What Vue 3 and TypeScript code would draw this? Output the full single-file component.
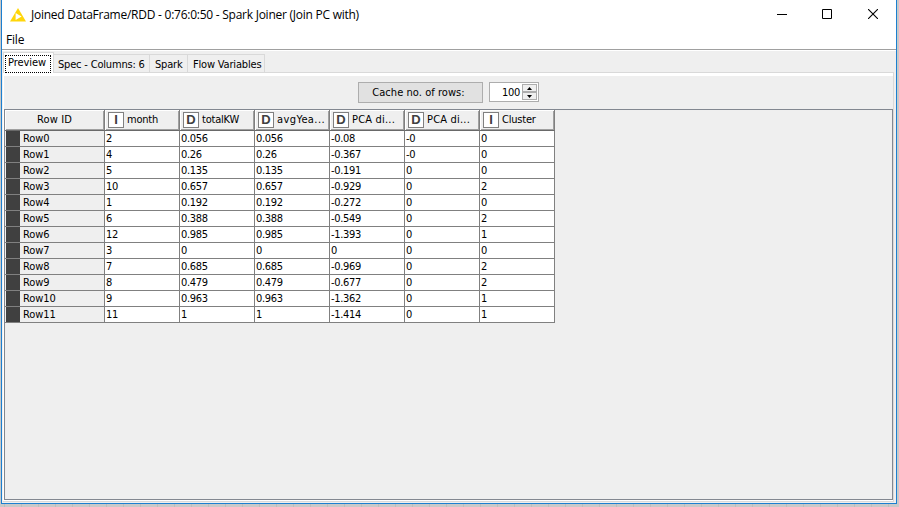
<script setup lang="ts">
interface Column { kind: 'I' | 'D'; name: string; cls: string }
const columns: Column[] = [
  { kind: 'I', name: 'month', cls: 'n-month' },
  { kind: 'D', name: 'totalKW', cls: 'n-total' },
  { kind: 'D', name: 'avgYea...', cls: 'n-avg' },
  { kind: 'D', name: 'PCA di...', cls: 'n-pca' },
  { kind: 'D', name: 'PCA di...', cls: 'n-pca' },
  { kind: 'I', name: 'Cluster', cls: 'n-cluster' },
]
const rows: string[][] = [
  ['2', '0.056', '0.056', '-0.08', '-0', '0'],
  ['4', '0.26', '0.26', '-0.367', '-0', '0'],
  ['5', '0.135', '0.135', '-0.191', '0', '0'],
  ['10', '0.657', '0.657', '-0.929', '0', '2'],
  ['1', '0.192', '0.192', '-0.272', '0', '0'],
  ['6', '0.388', '0.388', '-0.549', '0', '2'],
  ['12', '0.985', '0.985', '-1.393', '0', '1'],
  ['3', '0', '0', '0', '0', '0'],
  ['7', '0.685', '0.685', '-0.969', '0', '2'],
  ['8', '0.479', '0.479', '-0.677', '0', '2'],
  ['9', '0.963', '0.963', '-1.362', '0', '1'],
  ['11', '1', '1', '-1.414', '0', '1'],
]
</script>

<template>
  <div class="desktop">
    <div class="window">
      <header class="titlebar">
        <svg class="logo" width="16" height="14" viewBox="0 0 16 14">
          <path d="M8 0L16 13.6H0Z" fill="#ffd60a" />
          <path d="M5.6 5L11.6 8.6L5.6 12Z" fill="#fff" />
        </svg>
        <span class="title">Joined DataFrame/RDD - 0:76:0:50 - Spark Joiner (Join PC with)</span>
        <div class="controls">
          <svg class="minimize" width="10" height="10" viewBox="0 0 10 10"><path d="M0 5.5H10" stroke="#000" /></svg>
          <svg width="10" height="10" viewBox="0 0 10 10"><path d="M.5 .5H9.5V9.5H.5Z" fill="none" stroke="#000" /></svg>
          <svg width="10" height="10" viewBox="0 0 10 10"><path d="M0 0L10 10M10 0L0 10" stroke="#000" stroke-width="1.1" /></svg>
        </div>
      </header>
      <nav class="menubar"><span>File</span></nav>
      <main class="body">
        <div class="tabs">
          <div class="tab active"><span class="focus">Preview</span></div>
          <div class="tab spec">Spec - Columns: 6</div>
          <div class="tab spark">Spark</div>
          <div class="tab flow">Flow Variables</div>
        </div>
        <section class="pane">
          <div class="toolbar">
            <button class="cache">Cache no. of rows:</button>
            <div class="spinner">
              <span class="value">100</span>
              <div class="arrows">
                <i><svg width="5" height="3" viewBox="0 0 5 3"><path d="M0 3L2.5 0L5 3Z" /></svg></i>
                <i><svg width="5" height="3" viewBox="0 0 5 3"><path d="M0 0L2.5 3L5 0Z" /></svg></i>
              </div>
            </div>
          </div>
          <div class="scroll">
            <div class="grid">
              <div class="head rowid">Row ID</div>
              <div v-for="(c, i) in columns" :key="i" class="head">
                <b class="kind">{{ c.kind }}</b><span :class="c.cls">{{ c.name }}</span>
              </div>
              <template v-for="(r, i) in rows" :key="i">
                <div class="cell key"><i class="swatch"></i><span>Row{{ i }}</span></div>
                <div v-for="(v, j) in r" :key="j" class="cell">{{ v }}</div>
              </template>
            </div>
          </div>
        </section>
      </main>
    </div>
  </div>
</template>

<style>
body { overflow: hidden; }
</style>
<style scoped>
.desktop, .desktop * { box-sizing: border-box; }
.desktop {
  width: 899px; height: 507px; padding: 0 2px 3px 1px;
  background: repeating-linear-gradient(90deg, #c9c9c9 0 4px, #bdbdbd 4px 5px, #c9c9c9 5px 17px);
  font: 11px/14px "DejaVu Sans Condensed", "DejaVu Sans", sans-serif;
  font-stretch: condensed; letter-spacing: -.3px; color: #000;
}
.window {
  width: 896px; height: 504px; border: 1px solid #1c7fd0; border-top: 0;
  background: #fff; display: flex; flex-direction: column;
}
.titlebar { height: 30px; display: flex; align-items: center; padding: 0 18px 0 8px; flex: none; }
.logo { margin-top: -1px; }
.title { margin-left: 5px; font: 12px/16px "Open Sans", "Noto Sans", sans-serif; letter-spacing: -.25px; white-space: nowrap; }
.controls { margin-left: auto; display: flex; gap: 36px; margin-top: -2px; }
.controls svg { display: block; }
.minimize { margin-right: -1px; }
.menubar { height: 20px; padding: 2px 0 0 4px; border-bottom: 1px solid #a0a0a0; flex: none; font: 12px/16px "Open Sans", "Noto Sans", sans-serif; letter-spacing: -.2px; }
.body { flex: 1; margin-top: 1px; background: #efefef; padding: 1px 2px 1px 1px; display: flex; flex-direction: column; min-height: 0; }
.tabs { height: 21px; display: flex; align-items: flex-end; margin-bottom: -1px; z-index: 1; }
.tab { height: 19px; border: 1px solid #d9d9d9; border-left: 0; padding: 3px 0 0 4px; white-space: nowrap; letter-spacing: -.18px; }
.active { width: 51px; height: 21px; border-left: 1px solid #d9d9d9; border-bottom: 0; background: #fff; padding: 2px 0 0 1px; }
.focus { display: block; width: 46px; height: 18px; border: 1px dotted #000; padding: 0 0 0 2px; letter-spacing: -.05px; }
.spec { width: 96px; }
.spark { width: 38px; padding-left: 5px; }
.flow { width: 77px; padding-left: 5px; }
.pane { flex: 1; display: flex; flex-direction: column; border: 1px solid #d9d9d9; border-left: 0; padding: 3px 0 1px 1px; background: #fff; min-height: 0; }
.toolbar { height: 33px; flex: none; display: flex; justify-content: center; align-items: flex-start; gap: 6px; padding: 6px 0 0; background: #efefef; }
.cache { width: 125px; height: 21px; border: 1px solid #adadad; background: #e1e1e1; padding: 0 4px 0 0; font: inherit; font-stretch: condensed; letter-spacing: .05px; color: #000; }
.spinner { width: 50px; height: 20px; border: 1px solid #adadad; background: #fff; display: flex; justify-content: flex-end; }
.value { line-height: 19px; margin-right: 2px; }
.arrows { width: 16px; padding: 1px 1px 1px 0; display: flex; flex-direction: column; }
.arrows i { height: 8px; border: 1px solid #adadad; background: #efefef; display: flex; justify-content: center; align-items: center; }
.scroll { flex: 1; border: 1px solid #828790; background: #efefef; min-height: 0; }
.grid { display: grid; grid-template-columns: 100px repeat(6, 75px); grid-template-rows: 21px repeat(12, 16px); width: 550px; }
.head {
  display: flex; align-items: center; padding: 0 0 1px 2px; border-right: 1px solid #808080; border-bottom: 1px solid #696969;
  background: #efefef; box-shadow: inset 1px 1px #fff, inset -1px -1px #a0a0a0; white-space: nowrap; letter-spacing: -.2px;
}
.rowid { justify-content: center; padding-left: 0; letter-spacing: .1px; }
.n-avg { letter-spacing: .4px; }
.n-pca { letter-spacing: .2px; }
.kind { width: 16px; height: 16px; margin: 1px 3px 0 1px; border: 1px solid #808080; background: #fff; color: #404040; font: bold 13px/14px "Liberation Sans", sans-serif; text-align: center; letter-spacing: 0; }
.cell { border-right: 1px solid #808080; border-bottom: 1px solid #808080; background: #fff; padding-left: 1px; line-height: 15px; }
.key { display: flex; background: #efefef; letter-spacing: -.1px; }
.swatch { width: 14px; background: #404040; margin-right: 3px; }
</style>
